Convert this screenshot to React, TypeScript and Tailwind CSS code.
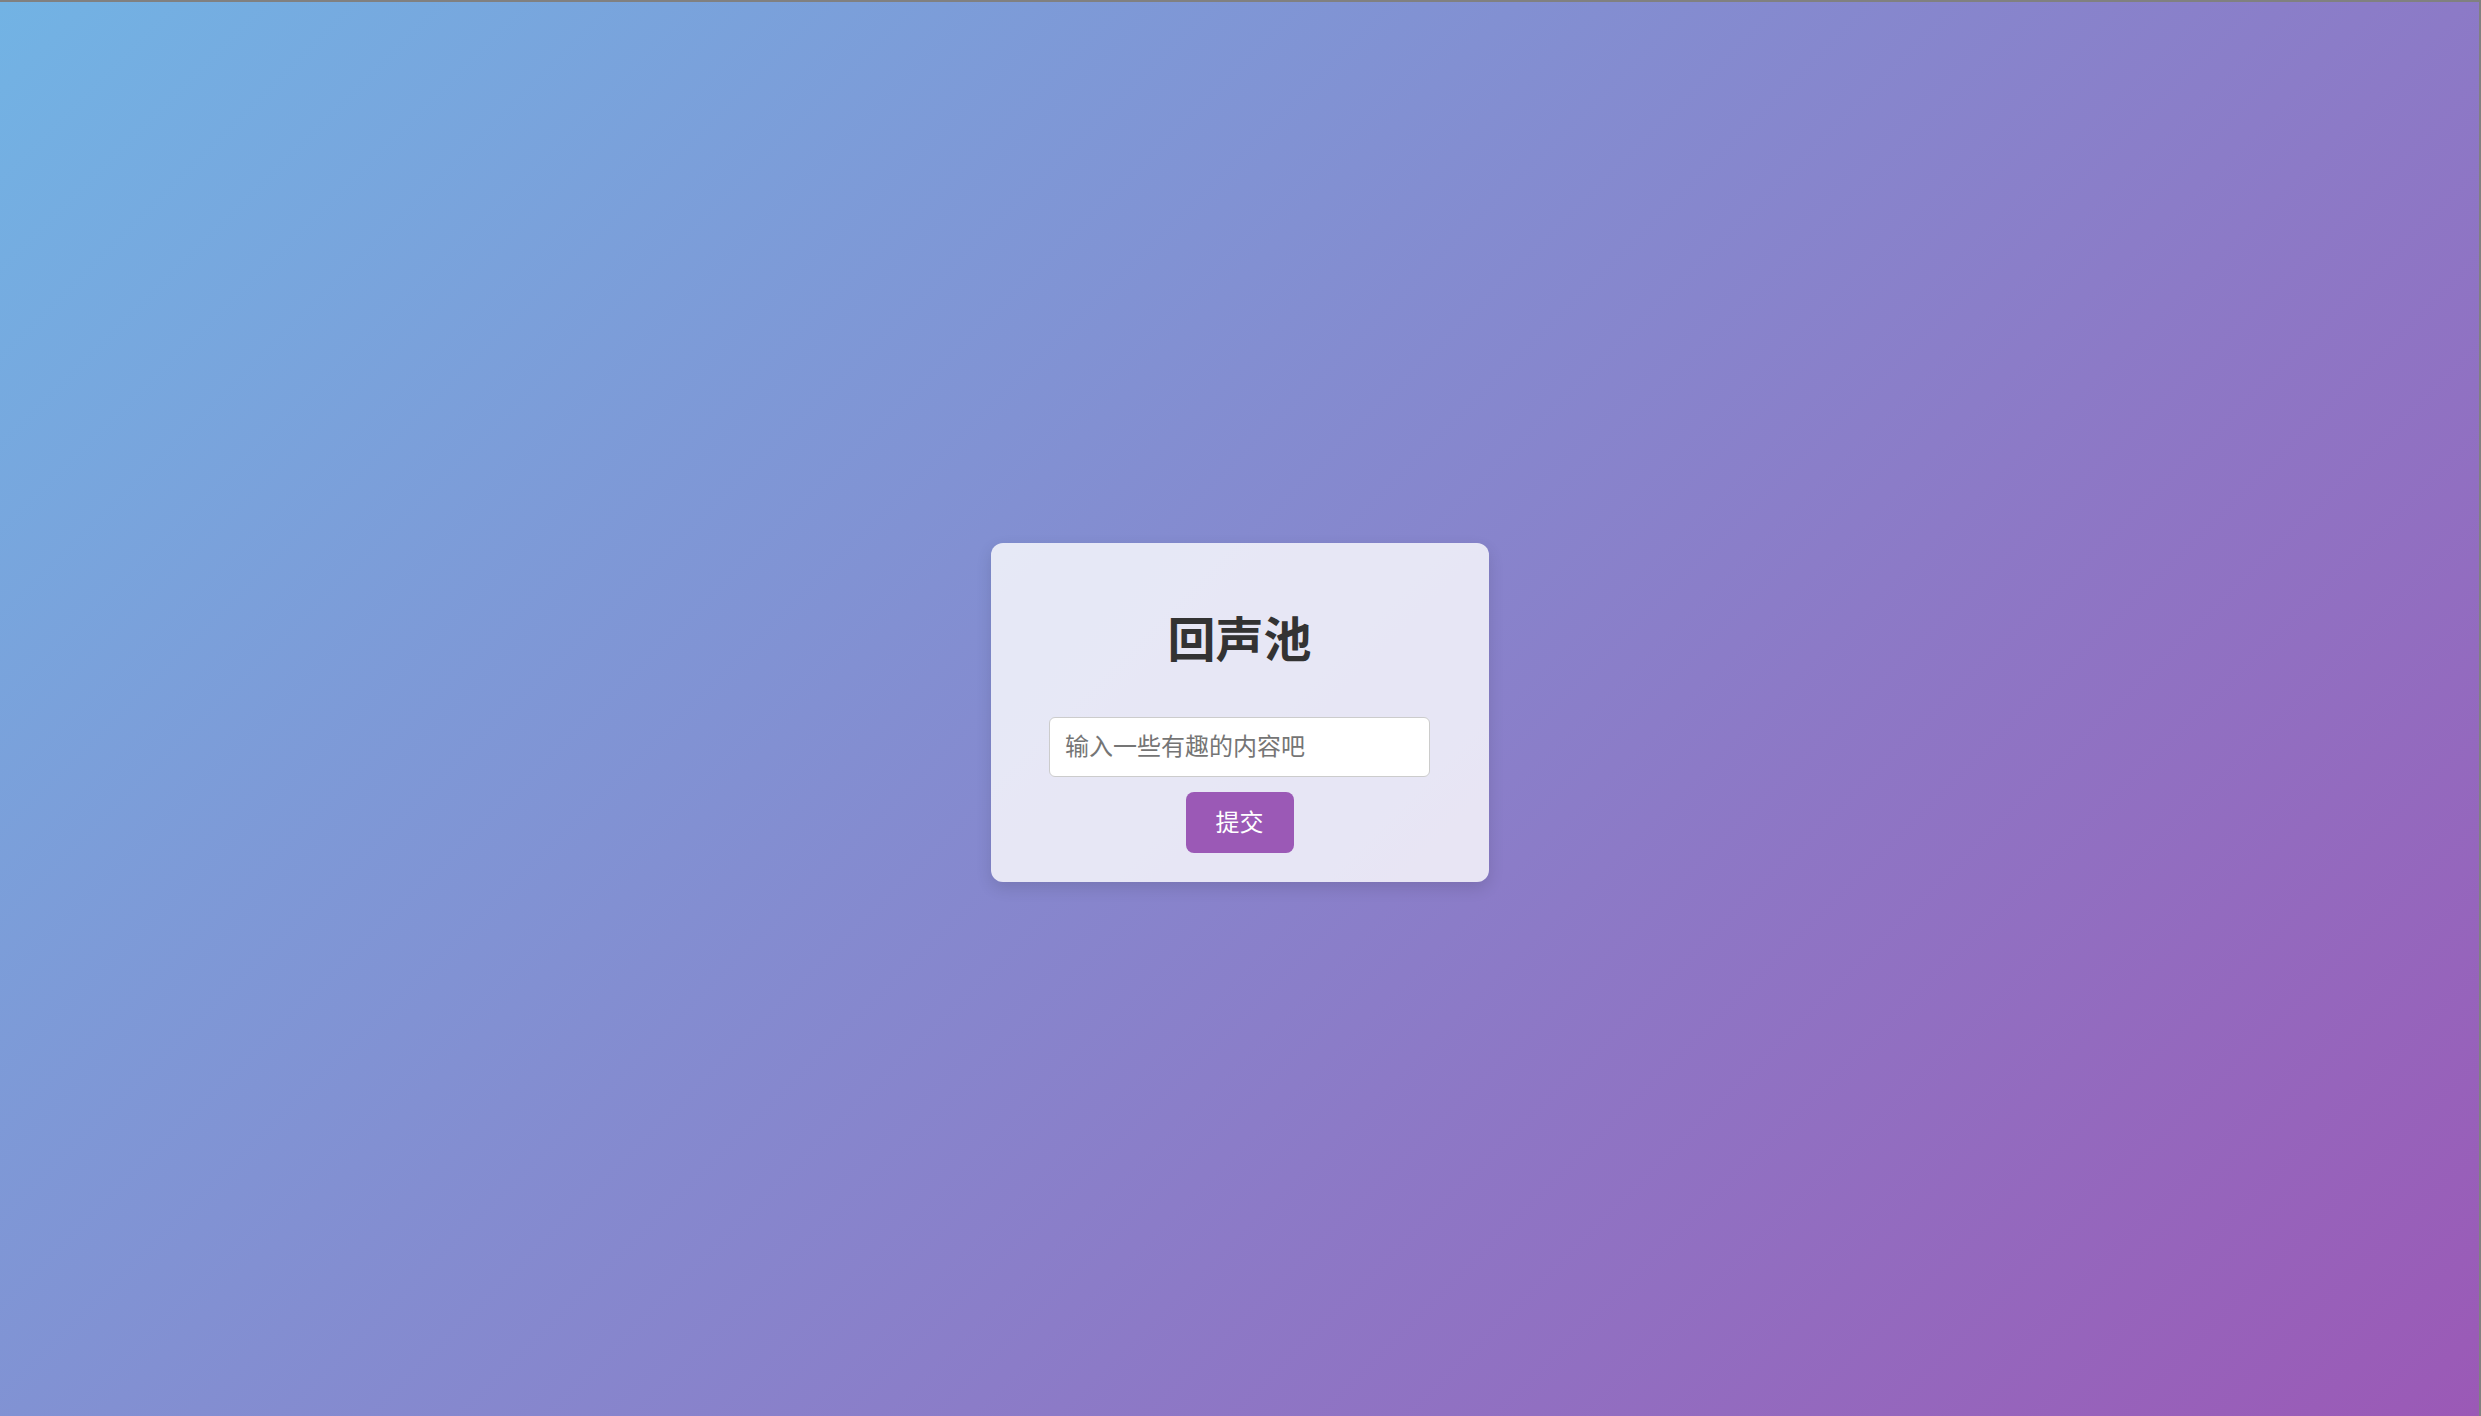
import React from "react";

export default function App() {
  return (
    <div
      className="w-[2481px] h-[1416px] flex items-center justify-center pt-[7px] bg-[linear-gradient(135deg,#72b3e4_0%,#9b59b6_100%)] border-t-2 border-t-[#808080] border-r-2 border-r-[#808080]"
      style={{ fontFamily: '"Liberation Sans", "Noto Sans CJK SC", sans-serif' }}
    >
      <div className="w-[498px] h-[339px] rounded-[12px] bg-[rgba(255,255,255,0.8)] shadow-[0_6px_16px_rgba(0,0,0,0.12)] flex flex-col items-center pt-[30px]">
        <h1 className="mt-[32px] h-[72px] leading-[72px] text-[48px] font-bold text-[#333333]">
          回声池
        </h1>
        <input
          type="text"
          placeholder="输入一些有趣的内容吧"
          className="mt-[40px] w-[381px] h-[60px] rounded-[6px] border-[1.5px] border-[#cccccc] bg-white px-[15px] text-[24px] text-[#333] placeholder:text-[#757575] outline-none"
        />
        <button className="mt-[15px] w-[108px] h-[61px] rounded-[8px] bg-[#9b59b6] text-white text-[24px]">
          提交
        </button>
      </div>
    </div>
  );
}
